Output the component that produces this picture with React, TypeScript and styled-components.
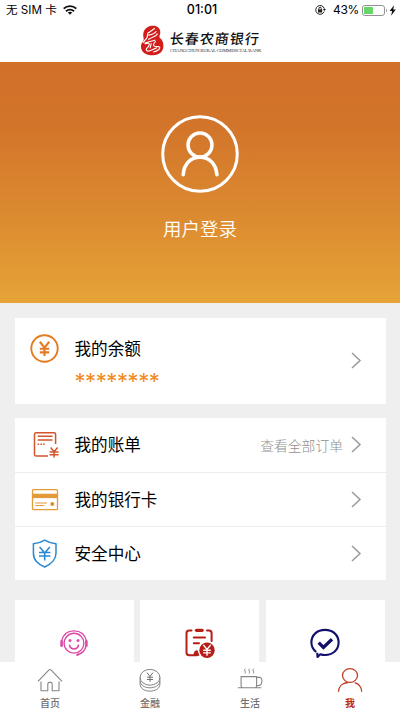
import React from "react";
import styled, { createGlobalStyle } from "styled-components";

const GlobalStyle = createGlobalStyle`
  * { box-sizing: border-box; }
  html, body { margin: 0; padding: 0; }
  body {
    font-family: "Liberation Sans", "Noto Sans CJK SC", sans-serif;
    color: #000;
    overflow: hidden;
  }
  svg { display: block; flex: none; overflow: visible; }
`;

const Screen = styled.div`
  width: 400px;
  height: 710px;
  display: flex;
  flex-direction: column;
  background: #efefef;
  overflow: hidden;
`;

const StatusBar = styled.div`
  height: 20px;
  flex: none;
  display: grid;
  grid-template-columns: 1fr auto 1fr;
  align-items: center;
  padding: 0 4px 0 6px;
  background: #fff;
  font-family: Inter, "Noto Sans CJK SC", sans-serif;
  font-size: 12px;
  line-height: 20px;
`;

const Carrier = styled.div`
  display: flex;
  align-items: center;
  gap: 6px;
  white-space: nowrap;
  font-size: 11.6px;
`;

const Clock = styled.div`
  font-size: 12.5px;
  font-weight: 500;
  padding-left: 2px;
`;

const Power = styled.div`
  display: flex;
  align-items: center;
  justify-content: flex-end;
`;

const Percent = styled.span`
  margin: 0 3px 0 7px;
  font-size: 12px;
  letter-spacing: -0.3px;
`;

const Header = styled.header`
  height: 42px;
  flex: none;
  display: flex;
  justify-content: center;
  padding: 5px 0 0 1px;
  gap: 6px;
  background: #fff;
`;

const Brand = styled.div`
  width: 91px;
  padding-top: 4px;
`;

const BrandName = styled.div`
  height: 18.5px;
  font-family: "Noto Sans CJK SC", sans-serif;
  font-size: 14px;
  font-weight: 500;
  letter-spacing: 1px;
  line-height: 18px;
  white-space: nowrap;
  color: #111;
  transform: skewX(-7deg);
`;

const BrandLatin = styled.div`
  font-family: "Liberation Serif", serif;
  font-size: 4.9px;
  line-height: 6px;
  letter-spacing: -0.22px;
  white-space: nowrap;
  color: #333;
`;

const Hero = styled.section`
  height: 241px;
  flex: none;
  display: flex;
  flex-direction: column;
  align-items: center;
  padding-top: 52px;
  background: linear-gradient(#d2702a 0%, #d2742a 25%, #dc8b30 65%, #e6a438 100%);
`;

const LoginLabel = styled.div`
  margin-top: 21px;
  font-family: "Noto Sans CJK SC", sans-serif;
  font-size: 18.5px;
  font-weight: 350;
  line-height: 26px;
  color: #fff;
`;

const Content = styled.main`
  flex: 1;
  min-height: 0;
  padding: 14.5px 14px 0 14.5px;
  overflow: hidden;
`;

const BalanceCard = styled.section`
  height: 86.5px;
  display: flex;
  align-items: center;
  padding: 0 25px 0 15px;
  background: #fff;
`;

const IconSlot = styled.div`
  width: 45px;
  flex: none;
`;

const BalanceIcon = styled(IconSlot)`
  align-self: flex-start;
  padding-top: 16px;
`;

const BalanceText = styled.div`
  flex: 1;
  align-self: flex-start;
  padding-top: 18px;
`;

const Title = styled.div`
  flex: 1;
  font-family: "Noto Sans CJK SC", sans-serif;
  font-size: 16.6px;
  line-height: 25px;
  white-space: nowrap;
`;

const MaskedAmount = styled.div`
  margin-top: 7px;
  font-family: Inter, sans-serif;
  font-size: 22px;
  font-weight: 400;
  line-height: 26px;
  letter-spacing: -0.4px;
  color: #ee8c1d;
`;

const List = styled.section`
  margin-top: 14px;
  background: #fff;
`;

const Row = styled.div`
  height: 54px;
  display: flex;
  align-items: center;
  padding: 0 25px 1px 15px;
  & + & { border-top: 1px solid #ececec; }
`;

const Hint = styled.span`
  margin-right: 8px;
  font-family: "Noto Sans CJK SC", sans-serif;
  font-size: 13.8px;
  font-weight: 300;
  color: #8f8f8f;
`;

const Tiles = styled.section`
  margin-top: 19.5px;
  display: grid;
  grid-template-columns: repeat(3, 119px);
  gap: 6.5px;
`;

const Tile = styled.div`
  height: 90px;
  display: flex;
  justify-content: center;
  padding-top: 28px;
  background: #fff;
`;

const TabBar = styled.nav`
  height: 48.5px;
  flex: none;
  display: grid;
  grid-template-columns: repeat(4, 1fr);
  background: #fff;
`;

const Tab = styled.div<{ $active?: boolean }>`
  display: flex;
  flex-direction: column;
  align-items: center;
  padding-top: 6.5px;
  font-family: "Noto Sans CJK SC", sans-serif;
  font-size: 10px;
  font-weight: ${(p) => (p.$active ? 700 : 500)};
  line-height: 15px;
  color: ${(p) => (p.$active ? "#bd2b12" : "#707070")};
  gap: 3px;
`;

const Yuan = ({ x, y, s, w, color = "currentColor" }: { x: number; y: number; s: number; w: number; color?: string }) => (
  <path
    transform={`translate(${x} ${y}) scale(${s})`}
    d="M-4-6 0-1 4-6M0-1V6M-4 0H4M-4 3H4"
    fill="none"
    stroke={color}
    strokeWidth={w / s}
  />
);

const Chevron = () => (
  <svg width="10" height="17" viewBox="0 0 10 17" fill="none" stroke="#999" strokeWidth="1.5">
    <path d="M1 1 9 8.5 1 16" />
  </svg>
);

const WifiIcon = () => (
  <svg width="14" height="10" viewBox="0 0 14 10" fill="none" stroke="#111" strokeWidth="1.9">
    <path d="M.7 3.7C4.2.2 9.8.2 13.3 3.7M3 6.2c2.2-2.1 5.8-2.1 8 0" />
    <path d="m4.8 7.5 2.2 2.3 2.2-2.3C8 6.5 6 6.5 4.8 7.5Z" fill="#111" stroke="none" />
  </svg>
);

const RotationLockIcon = () => (
  <svg width="11" height="10" viewBox="0 0 11 10" fill="none" stroke="#222" strokeWidth="1">
    <path d="M9.2 6.6A4.4 4.4 0 1 1 9.4 3.8" />
    <path d="m7.8 4.1 3.2 0-1.5 2Z" fill="#222" stroke="none" />
    <path d="M3.9 4.6V3.4a1.2 1.2 0 0 1 2.4 0v1.2" />
    <path d="M3 4.3h4.2v3.2H3Z" fill="#222" stroke="none" />
  </svg>
);

const BatteryIcon = () => (
  <svg width="34" height="11" viewBox="0 0 34 11">
    <rect x=".5" y=".5" width="22" height="10" rx="2.4" fill="#fff" stroke="#929292" />
    <rect x="2" y="2" width="9" height="7" rx=".5" fill="#68d568" />
    <path d="M24 3.5c1.2.5 1.2 3.5 0 4Z" fill="#929292" />
    <path d="m32 .2-4.4 5.9h2.5l-1 4.7 4.7-6.3h-2.6Z" fill="#111" />
  </svg>
);

const BankLogo = () => (
  <svg width="24" height="31" viewBox="0 0 24 31">
    <path fill="#d21e1b" d="M11.5.8C16.5 0 20.3 2.8 20.3 7c0 3.2-1.6 4.3-.3 6 2.3 1.8 3.4 4.4 3.4 7.8 0 6-4.4 9.5-10.4 9.5C5.6 30.3 1 27 1 21.4c0-3.9 3-4.6 2.7-7.4-.2-2.2-.9-3.8-.2-6.5C4.4 3.8 7.5 1.5 11.5.8Z" />
    <g fill="none" stroke="#fff" strokeWidth="1.15" strokeLinecap="round">
      <path d="M14.5 3.5 9 7.5M16 6.5c-1 2-4 3-7.3 3.6M8.5 7.5c-2.2 1.8 0 3.5-1.8 5.6-1 1.5-2.5 2.6-3.2 4.3M17.2 8.7c0 2.4-4.3 2.6-8.5 5.6M5.3 17.8l9.6-2.6M5 18.8c4-1.5 5.3 0 3.7 2.3-1.3 2-2.5 2-2.4 3.7.3 2 3.3 1.3 5.5.2l5-2.2M11.2 18.5l-1 4.5M15.5 16.6c-3 2.6-2.3 4.7 0 4.9 1.8.2 3.7-.5 4.2.8.5 1.8-2.5 4-6.2 4.7" />
    </g>
  </svg>
);

const AvatarIcon = () => (
  <svg width="80" height="80" viewBox="0 0 80 80" fill="none" stroke="#fff">
    <circle cx="40" cy="40" r="37.3" strokeWidth="3" />
    <circle cx="40" cy="31" r="12" strokeWidth="3.5" />
    <path d="M23.2 60.7C24 49.5 31 43.2 40 43.2s16 6.3 16.9 17.5" strokeWidth="3.6" strokeLinecap="round" />
  </svg>
);

const YuanCircleIcon = () => (
  <svg width="29" height="29" viewBox="0 0 29 29">
    <circle cx="14.5" cy="14.5" r="13.2" fill="none" stroke="#e57b20" strokeWidth="1.9" />
    <Yuan x={14.5} y={14.8} s={1.18} w={2.1} color="#e57b20" />
  </svg>
);

const BillIcon = () => (
  <svg width="29" height="29" viewBox="0 0 29 29" fill="none" stroke="#d1562c" strokeWidth="1.5">
    <path d="M25.6 14V4.2c0-1-.5-1.5-1.5-1.5H6.2c-1 0-1.7.7-1.7 1.7v20c0 1 .7 1.7 1.7 1.7H18" />
    <path d="M7.7 6.2H22.5M7.7 10H22.5" />
    <path d="M7.6 14.2H15" strokeDasharray="1.5 1.3" />
    <path d="M20.6 17.6 24.1 21.8 27.6 17.6M24.1 21.8V27.4M19.6 21.9h9M19.6 24.7h9" />
  </svg>
);

const CardIcon = () => (
  <svg width="29" height="29" viewBox="0 0 29 29" fill="none" stroke="#e39a38" strokeWidth="1.3">
    <rect x="2.5" y="4.7" width="25" height="20" rx="1" />
    <path d="M2.5 10.9h25" strokeWidth="4.4" />
    <path d="M5.3 18H17M5.3 20.6h9.2" strokeWidth="1" />
    <circle cx="22.3" cy="19.1" r="2" fill="#dd902e" stroke="none" />
  </svg>
);

const ShieldIcon = () => (
  <svg width="29" height="29" viewBox="0 0 29 29" fill="none" stroke="#2889d2" strokeWidth="1.5" strokeLinejoin="round">
    <path d="M14.7 1.1C18 3.2 22 4.4 26 4.7V14c0 7-4 10.6-11.3 14C7 24.6 3.4 21 3.4 14V4.7C7.5 4.4 11.5 3.2 14.7 1.1Z" />
    <path d="m9.6 8 5.1 6 5.1-6M14.7 14v7.4M9 13.5h11.4M9 17h11.4" strokeWidth="1.6" />
  </svg>
);

const ServiceIcon = () => (
  <svg width="30" height="30" viewBox="0 0 30 30" fill="none" stroke="#dc4ba6" strokeWidth="1.4" strokeLinecap="round">
    <circle cx="15" cy="15.2" r="9.9" />
    <path d="M2.5 13.2C4 6.5 8.5 2.9 15 2.9s11 3.6 12.5 10.3M27 18c-1 4.7-4 7.3-8 8.5" />
    <path d="M2.6 13.2v4.6M27.4 13.2v4.6" strokeWidth="2.6" />
    <path d="M10.6 17.2c.5 5 8.3 5 8.8 0" strokeWidth="1.6" />
    <circle cx="11" cy="12.6" r="1.5" fill="#dc4ba6" stroke="none" />
    <circle cx="19" cy="12.6" r="1.5" fill="#dc4ba6" stroke="none" />
    <circle cx="18.5" cy="26.7" r="1.3" fill="#dc4ba6" stroke="none" />
  </svg>
);

const ClipboardIcon = () => (
  <svg width="30" height="30" viewBox="0 0 30 30" fill="none" stroke="#b51d16" strokeWidth="2" strokeLinecap="round">
    <path d="M6.5 2.6H4.2C2.6 2.6 1.5 3.7 1.5 5.2v19.4c0 1.6 1.1 2.6 2.7 2.6H12M22 2.6h2c1.6 0 2.6 1.1 2.6 2.6V13" />
    <path d="M11.5 2.3h5.6" strokeWidth="3.2" />
    <path d="M8.8 9.4H20M8.8 15.2H14" />
    <path d="M8.5 27.8c0-4 1.5-5.5 4-5.5l2 5.5Z" fill="#b51d16" stroke="none" />
    <circle cx="22" cy="22.3" r="7.7" fill="#b51d16" stroke="none" />
    <Yuan x={22} y={22.3} s={0.84} w={1.35} color="#fff" />
  </svg>
);

const CheckBubbleIcon = () => (
  <svg width="30" height="30" viewBox="0 0 30 30" fill="none" stroke="#11106d" strokeWidth="2.1" strokeLinejoin="round">
    <path d="M6.2 24C3 21.5 1.4 18.2 1.4 14.5 1.4 7 7.2 1.9 15 1.9S28.6 7 28.6 14.5 22.8 27 15 27c-1.7 0-3.2-.3-4.7-.8L7.5 29l-.3-4.3" />
    <path d="m8.7 14.6 4.7 4.8 8.6-8.1" strokeWidth="3.3" strokeLinejoin="miter" />
  </svg>
);

const HomeIcon = () => (
  <svg width="26" height="24" viewBox="0 0 26 24" fill="none" stroke="#858585" strokeWidth="1.1" strokeLinejoin="round">
    <path d="M1 13.3 12 1.9c.6-.6 1.3-.6 1.9 0L25 13.3M4 13.5v9.2h6.8V16c0-1 .6-1.6 1.6-1.6h1.2c1 0 1.6.6 1.6 1.6v6.7H22v-9.2" />
  </svg>
);

const CoinsIcon = () => (
  <svg width="22" height="24" viewBox="0 0 22 24" fill="none" stroke="#858585" strokeWidth="1">
    <ellipse cx="11" cy="9.3" rx="9.9" ry="7.9" />
    <path d="M1.1 9.3v3.3c0 9.6 19.8 9.6 19.8 0V9.3M1.1 13v3c0 9.5 19.8 9.5 19.8 0v-3" />
    <Yuan x={11} y={9.2} s={0.76} w={1} />
  </svg>
);

const CupIcon = () => (
  <svg width="26" height="24" viewBox="0 0 26 24" fill="none" stroke="#858585" strokeWidth="1.1">
    <path d="M4.1 8.6h15.5V18c0 1-.5 1.7-1.5 1.7H5.6c-1 0-1.5-.7-1.5-1.7ZM19.6 9.4h3.2c3 0 2.7 7.6-.5 8l-2.7.2M1 19.8h23.3" />
    <path d="M8.2.7c-2 2 1.5 2.6-.3 4.9M12.4.7c-2 2 1.5 2.6-.3 4.9M16.6.7c-2 2 1.5 2.6-.3 4.9" strokeWidth=".9" />
  </svg>
);

const MeIcon = () => (
  <svg width="26" height="24" viewBox="0 0 26 24" fill="none" stroke="#c23d23" strokeWidth="1.3">
    <ellipse cx="13" cy="7.5" rx="7.5" ry="6.9" />
    <path d="M1.4 23.7c.3-5.5 4.2-9 9.8-9.2M17.7 14.7c4.3 1.2 6.7 4.4 7 9" />
  </svg>
);

const rows = [
  { title: "我的账单", Icon: BillIcon, hint: "查看全部订单" },
  { title: "我的银行卡", Icon: CardIcon },
  { title: "安全中心", Icon: ShieldIcon },
];

const tabs = [
  { label: "首页", Icon: HomeIcon },
  { label: "金融", Icon: CoinsIcon },
  { label: "生活", Icon: CupIcon },
  { label: "我", Icon: MeIcon, active: true },
];

export default function App() {
  return (
    <>
      <GlobalStyle />
      <Screen>
        <StatusBar>
          <Carrier>
            <span>无 SIM 卡</span>
            <WifiIcon />
          </Carrier>
          <Clock>01:01</Clock>
          <Power>
            <RotationLockIcon />
            <Percent>43%</Percent>
            <BatteryIcon />
          </Power>
        </StatusBar>
        <Header>
          <BankLogo />
          <Brand>
            <BrandName>长春农商银行</BrandName>
            <BrandLatin>CHANGCHUN RURAL COMMERCIAL BANK</BrandLatin>
          </Brand>
        </Header>
        <Hero>
          <AvatarIcon />
          <LoginLabel>用户登录</LoginLabel>
        </Hero>
        <Content>
          <BalanceCard>
            <BalanceIcon>
              <YuanCircleIcon />
            </BalanceIcon>
            <BalanceText>
              <Title>我的余额</Title>
              <MaskedAmount>********</MaskedAmount>
            </BalanceText>
            <Chevron />
          </BalanceCard>
          <List>
            {rows.map(({ title, Icon, hint }) => (
              <Row key={title}>
                <IconSlot>
                  <Icon />
                </IconSlot>
                <Title>{title}</Title>
                {hint && <Hint>{hint}</Hint>}
                <Chevron />
              </Row>
            ))}
          </List>
          <Tiles>
            <Tile>
              <ServiceIcon />
            </Tile>
            <Tile>
              <ClipboardIcon />
            </Tile>
            <Tile>
              <CheckBubbleIcon />
            </Tile>
          </Tiles>
        </Content>
        <TabBar>
          {tabs.map(({ label, Icon, active }) => (
            <Tab key={label} $active={active}>
              <Icon />
              <span>{label}</span>
            </Tab>
          ))}
        </TabBar>
      </Screen>
    </>
  );
}
